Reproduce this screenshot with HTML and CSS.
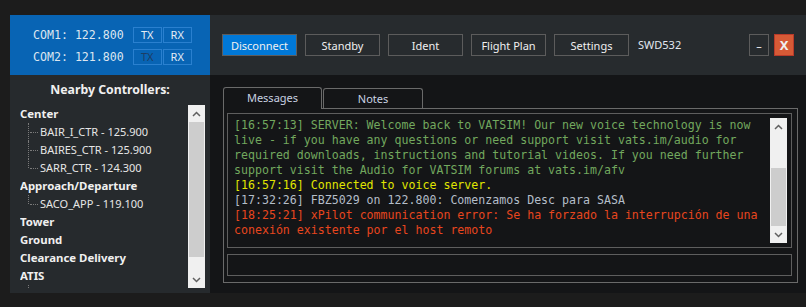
FILE: index.html
```html
<!DOCTYPE html>
<html lang="en">
<head>
  <meta charset="UTF-8">
  <title>xPilot</title>
  <link rel="stylesheet" href="styles.css">
</head>
<body>
  <div class="window">
    <!-- Radios -->
    <div class="com-panel">
      <div class="com-row">
        <span class="com-label">COM1: 122.800</span>
        <span class="radio-btn">TX</span>
        <span class="radio-btn">RX</span>
      </div>
      <div class="com-row">
        <span class="com-label">COM2: 121.800</span>
        <span class="radio-btn off">TX</span>
        <span class="radio-btn">RX</span>
      </div>
    </div>

    <!-- Barra de botones -->
    <div class="toolbar">
      <button class="tool-btn active">Disconnect</button>
      <button class="tool-btn">Standby</button>
      <button class="tool-btn">Ident</button>
      <button class="tool-btn">Flight Plan</button>
      <button class="tool-btn">Settings</button>
      <span class="callsign">SWD532</span>
      <div class="win-ctrls">
        <button class="win-btn">&ndash;</button>
        <button class="win-btn close">X</button>
      </div>
    </div>

    <!-- Controladores cercanos -->
    <div class="side">
      <h2>Nearby Controllers:</h2>
      <div class="tree-box">
        <ul class="tree">
          <li class="cat">Center</li>
          <li class="leaf">BAIR_I_CTR - 125.900</li>
          <li class="leaf">BAIRES_CTR - 125.900</li>
          <li class="leaf last">SARR_CTR - 124.300</li>
          <li class="cat">Approach/Departure</li>
          <li class="leaf last">SACO_APP - 119.100</li>
          <li class="cat">Tower</li>
          <li class="cat">Ground</li>
          <li class="cat">Clearance Delivery</li>
          <li class="cat">ATIS</li>
          <li class="leaf last">&nbsp;</li>
        </ul>
        <div class="scrollbar">
          <div class="sb-arrow"><svg width="9" height="6" viewBox="0 0 9 6"><polyline points="1,5 4.5,1.5 8,5" fill="none" stroke="#606060" stroke-width="1.5"/></svg></div>
          <div class="sb-track"><div class="sb-thumb tree-thumb"></div></div>
          <div class="sb-arrow"><svg width="9" height="6" viewBox="0 0 9 6"><polyline points="1,1 4.5,4.5 8,1" fill="none" stroke="#606060" stroke-width="1.5"/></svg></div>
        </div>
      </div>
    </div>

    <!-- Mensajes -->
    <div class="main">
      <div class="tabs">
        <div class="tab selected">Messages</div>
        <div class="tab">Notes</div>
      </div>
      <div class="tab-panel">
        <div class="messages">
          <div class="msg-text">
            <p class="server">[16:57:13] SERVER: Welcome back to VATSIM! Our new voice technology is now live - if you have any questions or need support visit vats.im/audio for required downloads, instructions and tutorial videos. If you need further support visit the Audio for VATSIM forums at vats.im/afv</p>
            <p class="voice">[16:57:16] Connected to voice server.</p>
            <p class="radio">[17:32:26] FBZ5029 on 122.800: Comenzamos Desc para SASA</p>
            <p class="error">[18:25:21] xPilot communication error: Se ha forzado la interrupción de una conexión existente por el host remoto</p>
          </div>
          <div class="scrollbar">
            <div class="sb-arrow"><svg width="9" height="6" viewBox="0 0 9 6"><polyline points="1,5 4.5,1.5 8,5" fill="none" stroke="#606060" stroke-width="1.5"/></svg></div>
            <div class="sb-track"><div class="sb-thumb msg-thumb"></div></div>
            <div class="sb-arrow"><svg width="9" height="6" viewBox="0 0 9 6"><polyline points="1,1 4.5,4.5 8,1" fill="none" stroke="#606060" stroke-width="1.5"/></svg></div>
          </div>
        </div>
        <div class="msg-input"></div>
      </div>
    </div>
  </div>
</body>
</html>
```

FILE: styles.css
```css
* {
  box-sizing: border-box;
}
body {
  margin: 0;
  padding: 15px 0 0 10px;
  background-color: #1c1c1c;
  font-family: 'Noto Sans', sans-serif;
  font-size: 11px;
  color: #f0f0f0;
}
.window {
  display: grid;
  grid-template-columns: 200px 596px;
  grid-template-rows: 60px 218px;
}
/* --- Radios --- */
.com-panel {
  background-color: #0864b4;
  padding: 12px 0 0 23px;
  display: flex;
  flex-direction: column;
  gap: 6px;
}
.com-row {
  display: flex;
  align-items: center;
  height: 16px;
  gap: 1px;
}
.com-label {
  font-family: 'DejaVu Sans Mono', monospace;
  font-size: 11.6px;
  color: #dde6f0;
  margin-right: 8px;
}
.radio-btn {
  width: 29px;
  height: 16px;
  border: 1px solid #2a80cf;
  font-size: 11px;
  line-height: 14px;
  text-align: center;
  color: #e4ecf4;
}
.radio-btn.off {
  color: #1d3d63;
}
/* --- Barra de botones --- */
.toolbar {
  background-color: #272b2e;
  padding: 19px 12px 0 12px;
  display: flex;
  align-items: flex-start;
  gap: 8px;
}
button {
  font-family: inherit;
  font-size: 11px;
  color: #f0f0f0;
  background-color: transparent;
  border: 1px solid #5c5c5c;
  padding: 0;
  height: 22px;
  cursor: pointer;
}
.tool-btn {
  width: 75px;
}
.tool-btn.active {
  background-color: #0078d7;
}
.callsign {
  line-height: 22px;
  margin-left: 1px;
  color: #e2e8f0;
}
.win-ctrls {
  margin-left: auto;
  display: flex;
  gap: 5px;
}
.win-btn {
  width: 20px;
}
.win-btn.close {
  background-color: #d65a36;
  border-color: #b83a2a;
  font-weight: bold;
  font-size: 13px;
}
/* --- Controladores --- */
.side {
  background-color: #262a2d;
  padding: 0 5px 0 10px;
}
.side h2 {
  margin: 0;
  height: 30px;
  line-height: 30px;
  font-size: 12.3px;
  font-weight: bold;
  text-align: center;
  padding-right: 5px;
}
.tree-box {
  display: flex;
  height: 183px;
  overflow: hidden;
}
.tree {
  flex: 1;
  margin: 0;
  padding: 0;
  list-style: none;
}
.tree li {
  height: 18px;
  line-height: 18px;
  white-space: nowrap;
}
.cat {
  font-weight: bold;
  font-size: 11.4px;
}
.leaf {
  position: relative;
  padding-left: 20px;
  color: #e6e6e6;
}
.leaf::before {
  content: "";
  position: absolute;
  left: 8px;
  top: 0;
  height: 100%;
  border-left: 1px dotted #7a7a7a;
}
.leaf.last::before {
  height: 9px;
}
.leaf::after {
  content: "";
  position: absolute;
  left: 10px;
  top: 9px;
  width: 8px;
  border-top: 1px dotted #7a7a7a;
}
/* --- Scrollbar --- */
.scrollbar {
  width: 17px;
  flex: none;
  display: flex;
  flex-direction: column;
  background-color: #f0f0f0;
}
.sb-arrow {
  height: 17px;
  display: flex;
  align-items: center;
  justify-content: center;
}
.sb-track {
  flex: 1;
  display: flex;
  flex-direction: column;
}
.sb-thumb {
  margin: 0 1px;
  background-color: #cdcdcd;
}
.tree-thumb {
  height: 135px;
}
.msg-thumb {
  height: 58px;
  margin-top: auto;
}
/* --- Mensajes --- */
.main {
  background-color: #141517;
  padding: 12px 8px 10px 13px;
}
.tabs {
  display: flex;
  align-items: flex-end;
  gap: 1px;
  height: 21px;
}
.tab {
  width: 100px;
  height: 20px;
  border: 1px solid #6a6a6a;
  border-bottom: none;
  border-radius: 3px 3px 0 0;
  text-align: center;
  line-height: 19px;
  color: #c9d2e2;
}
.tab.selected {
  position: relative;
  width: 99px;
  height: 22px;
  margin-bottom: -1px;
  background-color: #141517;
  line-height: 20px;
}
.tab-panel {
  border: 1px solid #6a6a6a;
  height: 175px;
  padding: 4px 5px 6px 3px;
  display: flex;
  flex-direction: column;
  gap: 6px;
}
.messages {
  height: 135px;
  border: 1px solid #5e5e5e;
  padding: 4px;
  display: flex;
}
.msg-text {
  flex: 1;
  padding-left: 2px;
  font-family: 'DejaVu Sans Mono', monospace;
  font-size: 11.6px;
  line-height: 15px;
  overflow: hidden;
}
.msg-text p {
  margin: 0;
}
.server {
  color: #72a85e;
}
.voice {
  color: #e0e600;
}
.radio {
  color: #b4bec9;
}
.error {
  color: #e8461e;
}
.msg-input {
  height: 22px;
  border: 1px solid #5e5e5e;
}
```
